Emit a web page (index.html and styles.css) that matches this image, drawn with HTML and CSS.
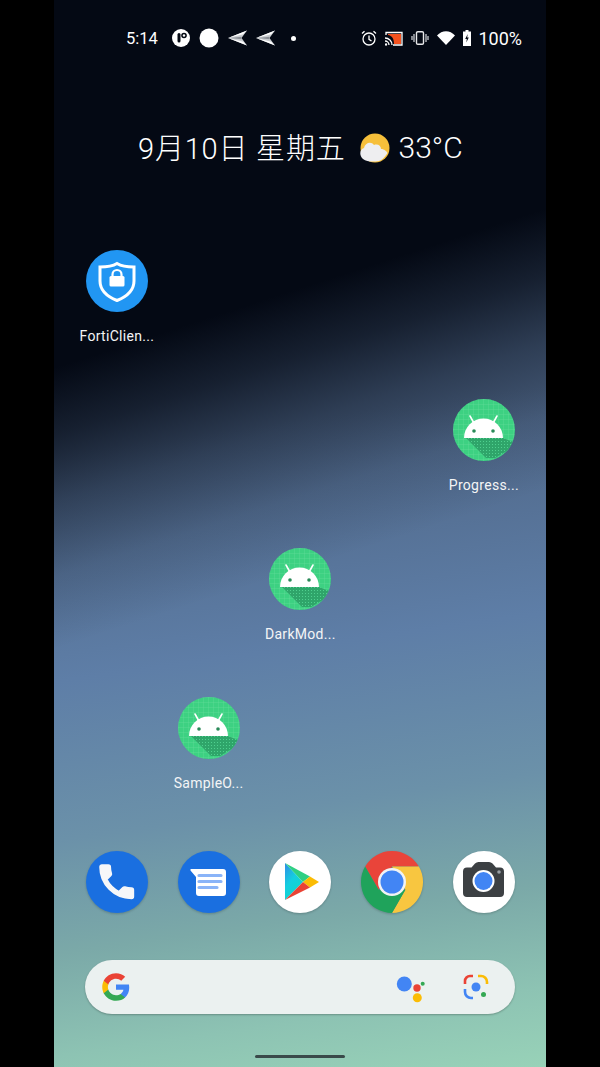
FILE: index.html
```html
<!DOCTYPE HTML>
<html lang="zh">
<head>
    <meta charset="UTF-8">
    <meta name="viewport" content="width=device-width, initial-scale=1">
    <title>Home screen</title>
    <link rel="stylesheet" href="styles.css">
</head>
<body>

<svg class="defs" width="0" height="0">
    <defs>
        <pattern id="gridLines" width="5" height="5" patternUnits="userSpaceOnUse">
            <path d="M0 0H5M0 0V5" stroke="#66dc9c" stroke-width="0.6" fill="none"/>
        </pattern>
        <pattern id="shadowDots" width="3" height="3" patternUnits="userSpaceOnUse">
            <rect width="3" height="3" fill="#2fa56a"/>
            <rect width="1" height="1" fill="#4fd08f"/>
        </pattern>
        <linearGradient id="playBlue" x1="0" y1="0" x2="0.6" y2="1">
            <stop offset="0" stop-color="#2f8be6"/>
            <stop offset="0.5" stop-color="#14cfe0"/>
            <stop offset="1" stop-color="#12d6c8"/>
        </linearGradient>
        <clipPath id="iconClip"><circle cx="31" cy="31" r="31"/></clipPath>
        <symbol id="androidApp" viewBox="0 0 62 62">
            <circle cx="31" cy="31" r="31" fill="#3dd182"/>
            <circle cx="31" cy="31" r="31" fill="url(#gridLines)"/>
            <polygon points="13,39 50,39 60,43 57,50 42,59 33,59" fill="url(#shadowDots)" clip-path="url(#iconClip)"/>
            <path d="M11 39a19.500 19.500 0 0 1 39 0z" fill="#fff"/>
            <path d="M17 17l5 9M44 17l-5 9" stroke="#fff" stroke-width="1.600" stroke-linecap="round"/>
            <circle cx="21" cy="32" r="1.800" fill="#2a8a58"/>
            <circle cx="40" cy="32" r="1.800" fill="#2a8a58"/>
        </symbol>
        <symbol id="sendArrow" viewBox="0 0 19 18">
            <path d="M0 9L19 1.500L13.500 9L19 16.500z" fill="#c9ccd0"/>
            <path d="M0 9L19 1.500L15 5.200z" fill="#fff"/>
            <path d="M0 9L19 16.500L15 12.800z" fill="#fff"/>
            <path d="M2 9L13.500 7.800V10.200z" fill="#8b8f96"/>
        </symbol>
    </defs>
</svg>

<div class="screen">

    <!-- status bar -->
    <div class="status-bar">
        <div class="status-left">
            <span class="clock">5:14</span>
            <svg class="s-icon" width="18" height="18" viewBox="0 0 18 18">
                <circle cx="9" cy="9" r="9" fill="#fff"/>
                <rect x="5.500" y="4" width="3" height="9.500" rx="1.500" fill="#050a14"/>
                <circle cx="12" cy="6.500" r="2.800" fill="#050a14"/>
                <circle cx="12" cy="6.500" r="1.200" fill="#fff"/>
            </svg>
            <svg class="s-icon" width="20" height="20" viewBox="0 0 20 20"><circle cx="10" cy="10" r="9.500" fill="#fff"/></svg>
            <svg class="s-icon" width="19" height="18"><use href="#sendArrow"/></svg>
            <svg class="s-icon" width="19" height="18"><use href="#sendArrow"/></svg>
            <span class="s-dot"></span>
        </div>
        <div class="status-right">
            <svg class="s-icon" width="16" height="16" viewBox="0 0 16 16" fill="none" stroke="#fff" stroke-width="1.300">
                <circle cx="8" cy="9" r="6"/>
                <path d="M8 5.500V9.300L10.500 11M1 3.500L3.500 1.200M15 3.500L12.500 1.200"/>
            </svg>
            <svg class="s-icon" width="18" height="15" viewBox="0 0 18 15">
                <path d="M1 4V1.500H17V14H8" fill="none" stroke="#fff" stroke-width="1.300"/>
                <path d="M3 3H16V13H9C9 8 7 4.500 3 4z" fill="#f4511e"/>
                <path d="M0 7a7 7 0 0 1 7 7M0 10a4 4 0 0 1 4 4" fill="none" stroke="#fff" stroke-width="1.300"/>
                <circle cx="1" cy="13.500" r="1.200" fill="#fff"/>
            </svg>
            <svg class="s-icon" width="18" height="14" viewBox="0 0 18 14">
                <rect x="5.500" y="0.700" width="7" height="12.600" rx="1.300" fill="none" stroke="#e8e8ea" stroke-width="1.400"/>
                <path d="M3 3V11M1 5V9M15 3V11M17 5V9" stroke="#b9bcc1" stroke-width="1.400"/>
            </svg>
            <svg class="s-icon" width="18" height="14" viewBox="0 0 18 14"><path d="M0 4.500C5 -1.200 13 -1.200 18 4.500L9 14z" fill="#fff"/></svg>
            <svg class="s-icon" width="8" height="16" viewBox="0 0 8 16">
                <path d="M2.500 0H5.500V1.500H8V16H0V1.500H2.500z" fill="#fff"/>
                <path d="M4.700 4L2.200 9H3.800L3.300 12.500L5.800 7.500H4.200z" fill="#050a14"/>
            </svg>
            <span class="battery-text">100%</span>
        </div>
    </div>

    <!-- date and weather -->
    <div class="glance">
        <span class="glance-date">9月10日 星期五</span>
        <svg class="glance-sun" width="30" height="30" viewBox="0 0 30 30">
            <circle cx="15" cy="15" r="14.500" fill="#f6bf3a"/>
            <path d="M3 26C-1 23 -0.500 16 4 15C5 10 11 8 14 12C18 10.500 21 13 21 16C24 16 27 18.500 27.500 20C25 24 22 27 19 28C13 29 7 29 3 26z" fill="#eeeef0"/>
        </svg>
        <span class="glance-temp">33°C</span>
    </div>

    <!-- desktop icons -->
    <div class="app-grid">
        <div class="app col-1 row-1">
            <svg width="62" height="62" viewBox="0 0 62 62">
                <circle cx="31" cy="31" r="31" fill="#2196f3"/>
                <path d="M31 13.500C36 16.500 42 17 48 17V31C48 40 41 46.500 31 50.500C21 46.500 14 40 14 31V17C20 17 26 16.500 31 13.500z" fill="none" stroke="#fff" stroke-width="3"/>
                <rect x="23.500" y="26" width="15" height="10.500" rx="1.500" fill="#fff"/>
                <path d="M26.500 26.500V24.500a4.500 4.500 0 0 1 9 0V26.500" fill="none" stroke="#fff" stroke-width="2.200"/>
            </svg>
            <span class="app-label">FortiClien...</span>
        </div>
        <div class="app col-5 row-2">
            <svg width="62" height="62"><use href="#androidApp"/></svg>
            <span class="app-label">Progress...</span>
        </div>
        <div class="app col-3 row-3">
            <svg width="62" height="62"><use href="#androidApp"/></svg>
            <span class="app-label">DarkMod...</span>
        </div>
        <div class="app col-2 row-4">
            <svg width="62" height="62"><use href="#androidApp"/></svg>
            <span class="app-label">SampleO...</span>
        </div>
    </div>

    <!-- dock -->
    <div class="dock">
        <svg class="dock-icon" width="62" height="62" viewBox="0 0 62 62">
            <circle cx="31" cy="31" r="31" fill="#1a6fe0"/>
            <g transform="translate(8.500 8.500) scale(1.850)">
                <path d="M6.620 10.790c1.440 2.830 3.760 5.140 6.590 6.590l2.200-2.200c.27-.27.67-.36 1.020-.24 1.120.37 2.330.57 3.570.57.55 0 1 .45 1 1V20c0 .55-.45 1-1 1-9.390 0-17-7.610-17-17 0-.55.45-1 1-1h3.500c.55 0 1 .45 1 1 0 1.250.2 2.450.57 3.570.11.350.03.740-.25 1.020l-2.200 2.200z" fill="#f6f7f9" stroke="#f6f7f9" stroke-width="0.900" stroke-linejoin="round"/>
            </g>
        </svg>
        <svg class="dock-icon" width="62" height="62" viewBox="0 0 62 62">
            <circle cx="31" cy="31" r="31" fill="#1a6fe0"/>
            <path d="M13 18H45a3 3 0 0 1 3 3V42a3 3 0 0 1-3 3H21a3 3 0 0 1-3-3V26L12.500 19.500Q12 18 13 18z" fill="#fff"/>
            <path d="M21 24.500H43M21 30.500H43M21 36.500H39" stroke="#8ab4f8" stroke-width="3.200" stroke-linecap="round"/>
        </svg>
        <svg class="dock-icon" width="62" height="62" viewBox="0 0 62 62">
            <circle cx="31" cy="31" r="31" fill="#fff"/>
            <path d="M16 12L34 31L16 49z" fill="url(#playBlue)"/>
            <path d="M16 12L41 25.500L34 31z" fill="#2fd083"/>
            <path d="M41 25.500L50 31L41 36.500L34 31z" fill="#fbbc04"/>
            <path d="M16 49L34 31L41 36.500z" fill="#ea4335"/>
        </svg>
        <svg class="dock-icon" width="62" height="62" viewBox="0 0 62 62">
            <path d="M4.150 15.500A31 31 0 0 1 57.850 15.500H31L17.600 38.750z" fill="#e9443a"/>
            <path d="M57.850 15.500A31 31 0 0 1 31 62L44.400 38.750L31 15.500z" fill="#f8c640"/>
            <path d="M31 62A31 31 0 0 1 4.150 15.500L17.600 38.750L44.400 38.750z" fill="#1fa35b"/>
            <circle cx="31" cy="31" r="14" fill="#f1f3f4"/>
            <circle cx="31" cy="31" r="11.500" fill="#4285f4"/>
        </svg>
        <svg class="dock-icon" width="62" height="62" viewBox="0 0 62 62">
            <circle cx="31" cy="31" r="31" fill="#fff"/>
            <path d="M14 16.500H18.500L22 12.500Q23.500 11 25.500 11H36Q38 11 39.500 12.500L43 16.500H47a4 4 0 0 1 4 4V42a4 4 0 0 1-4 4H14a4 4 0 0 1-4-4V20.500a4 4 0 0 1 4-4z" fill="#3c4043"/>
            <circle cx="30.500" cy="30" r="11" fill="#fff"/>
            <circle cx="30.500" cy="30" r="9" fill="#4285f4"/>
            <circle cx="46" cy="21" r="1.800" fill="#9aa0a6"/>
        </svg>
    </div>

    <!-- search bar -->
    <div class="search-bar">
        <svg class="g-logo" width="30" height="30" viewBox="0 0 48 48">
            <path d="M45.120 24.500c0-1.560-.14-3.060-.4-4.500H24v8.510h11.840c-.51 2.750-2.060 5.080-4.390 6.640v5.520h7.110c4.160-3.830 6.560-9.470 6.560-15.170z" fill="#4285f4"/>
            <path d="M24 46c5.940 0 10.920-1.970 14.560-5.330l-7.110-5.520c-1.970 1.320-4.490 2.100-7.450 2.100-5.730 0-10.580-3.870-12.310-9.070H4.340v5.700C7.960 41.070 15.400 46 24 46z" fill="#34a853"/>
            <path d="M11.690 28.180C11.250 26.860 11 25.450 11 24s.25-2.860.69-4.180v-5.700H4.340C2.850 17.090 2 20.450 2 24c0 3.550.85 6.910 2.340 9.880l7.350-5.700z" fill="#fbbc05"/>
            <path d="M24 10.750c3.230 0 6.130 1.110 8.410 3.290l6.310-6.310C34.910 4.180 29.930 2 24 2 15.400 2 7.960 6.930 4.340 14.120l7.350 5.700c1.730-5.200 6.580-9.070 12.310-9.070z" fill="#ea4335"/>
        </svg>
        <svg class="assistant" width="32" height="30" viewBox="0 0 32 30">
            <circle cx="8.300" cy="11" r="7.500" fill="#4285f4"/>
            <circle cx="21" cy="15" r="3.700" fill="#ea4335"/>
            <circle cx="26.700" cy="10.700" r="2" fill="#34a853"/>
            <circle cx="21.300" cy="24.700" r="4.500" fill="#fbbc05"/>
        </svg>
        <svg class="lens" width="26" height="26" viewBox="0 0 26 26" fill="none" stroke-width="2.600">
            <path d="M2 10V7a5 5 0 0 1 5-5H10" stroke="#ea4335"/>
            <path d="M15 2H18a6 6 0 0 1 6 6V10" stroke="#fbbc05"/>
            <path d="M2 15V18a6 6 0 0 0 6 6H10" stroke="#4285f4"/>
            <circle cx="13" cy="13" r="4.500" fill="#4285f4" stroke="none"/>
            <circle cx="20.500" cy="20.500" r="2.500" fill="#34a853" stroke="none"/>
        </svg>
    </div>

    <div class="nav-handle"></div>
</div>

</body>
</html>
```

FILE: styles.css
```css
body {
    margin: 0;
    background-color: #000;
    font-family: Roboto, "Noto Sans CJK SC", sans-serif;
    display: flex;
    justify-content: center;
}
.defs {
    position: absolute;
}
.screen {
    width: 492px;
    height: 1067px;
    overflow: hidden;
    display: flex;
    flex-direction: column;
    align-items: center;
    background:
        linear-gradient(162deg, #040914 0, #040914 30%, rgba(4, 9, 20, 0.75) 35.5%, rgba(4, 9, 20, 0.42) 41%, rgba(4, 9, 20, 0.14) 47%, rgba(4, 9, 20, 0) 53%),
        linear-gradient(172deg, #4d6484 0, #4d6484 40%, #5e7ea7 60%, #6b91a9 74%, #7ba9a8 84%, #8dc3b3 93%, #98d2b8 100%);
}
.status-bar {
    width: 100%;
    height: 76px;
    box-sizing: border-box;
    padding: 0 24px 0 72px;
    display: flex;
    align-items: center;
    justify-content: space-between;
    color: white;
}
.status-left, .status-right {
    display: flex;
    align-items: center;
}
.clock {
    font-size: 16.5px;
    width: 46px;
}
.status-left .s-icon {
    margin-right: 9px;
}
.s-dot {
    width: 5px;
    height: 5px;
    border-radius: 50%;
    background: white;
    margin-left: 7px;
}
.status-right {
    gap: 8px;
}
.battery-text {
    font-size: 18px;
    margin-left: -1px;
}
.glance {
    width: 100%;
    height: 143px;
    box-sizing: border-box;
    padding-left: 84px;
    display: flex;
    align-items: center;
    color: white;
    margin-bottom: 31px;
}
.glance-date {
    font-size: 29px;
    font-weight: 300;
    letter-spacing: 0.8px;
    white-space: nowrap;
    margin-bottom: 3px;
}
.glance-sun {
    margin-left: 14px;
}
.glance-temp {
    font-size: 30px;
    font-weight: 300;
    margin-left: 9px;
}
.app-grid, .dock {
    width: 100%;
    box-sizing: border-box;
    padding-left: 17px;
    display: grid;
    grid-template-columns: repeat(5, 91.75px);
}
.app-grid {
    grid-template-rows: repeat(4, 149px);
}
.app {
    display: flex;
    flex-direction: column;
    align-items: center;
    color: white;
}
.app-label {
    font-size: 14px;
    margin-top: 16px;
    letter-spacing: 0.3px;
    color: #f4f5f6;
    white-space: nowrap;
}
.col-1 { grid-column: 1; }
.col-2 { grid-column: 2; }
.col-3 { grid-column: 3; }
.col-5 { grid-column: 5; }
.row-1 { grid-row: 1; }
.row-2 { grid-row: 2; }
.row-3 { grid-row: 3; }
.row-4 { grid-row: 4; }
.dock {
    margin-top: 5px;
    justify-items: center;
}
.dock-icon {
    filter: drop-shadow(0 1px 1px rgba(0, 0, 0, 0.2));
}
.search-bar {
    width: 430px;
    height: 54px;
    margin-top: 47px;
    border-radius: 27px;
    background: #ebf1f0;
    box-shadow: 0 1px 2px rgba(0, 0, 0, 0.25);
    display: flex;
    align-items: center;
    box-sizing: border-box;
    padding: 0 26px 0 16px;
}
.assistant {
    margin-left: auto;
    margin-top: 2px;
}
.lens {
    margin-left: 35px;
}
.nav-handle {
    width: 90px;
    height: 3px;
    margin-top: 41px;
    border-radius: 2px;
    background: #3a4a4a;
}
```
